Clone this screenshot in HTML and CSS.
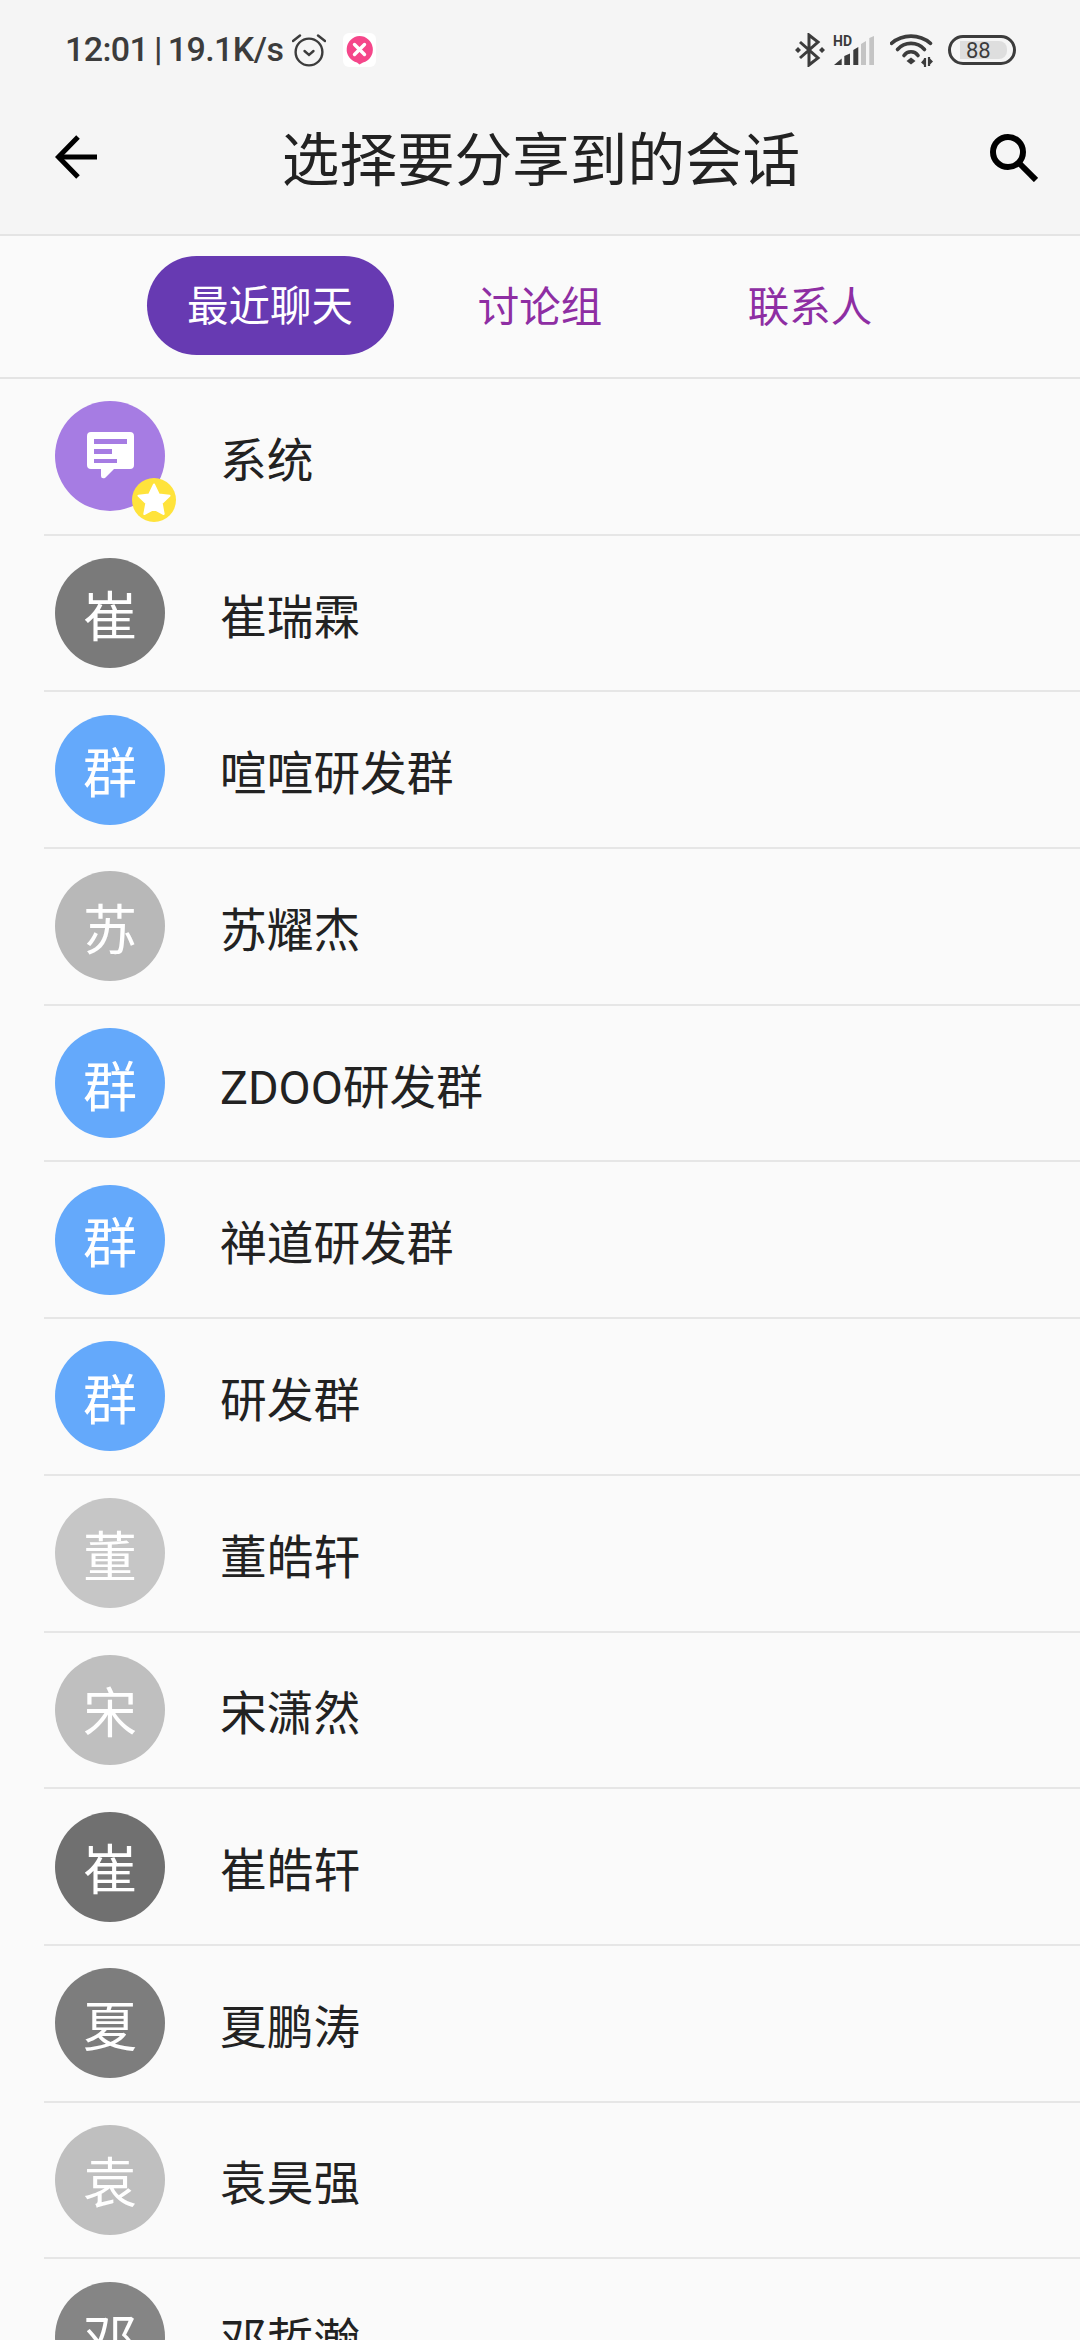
FILE: index.html
```html
<!DOCTYPE html>
<html lang="zh-CN">
<head>
  <meta charset="UTF-8">
  <meta name="viewport" content="width=device-width, initial-scale=1.0">
  <link rel="stylesheet" href="styles.css">
  <title>选择要分享到的会话</title>
</head>
<body>
  <header class="top">
    <!-- status bar -->
    <div class="status">
      <div class="status-left">
        <span class="status-text">12:01 | 19.1K/s</span>
        <svg class="alarm" viewBox="0 0 34 34" fill="none" stroke="#3c3c3c" stroke-width="2.4">
          <circle cx="17" cy="19" r="13.4"/>
          <path d="M1 8 L8 2.5 M33 8 L26 2.5" stroke-linecap="round"/>
          <path d="M12.5 18 L17 22 L21.5 18" stroke-linecap="round"/>
        </svg>
        <svg class="notif" viewBox="0 0 33 34">
          <rect width="33" height="34" rx="6" fill="#fff"/>
          <path d="M16.5 3 A13.5 13.5 0 0 1 20 29.5 L16.5 31.5 L14 29.6 A13.5 13.5 0 0 1 16.5 3 Z" fill="#f5468a"/>
          <path d="M11.5 11.5 L21.5 21.5 M21.5 11.5 L11.5 21.5" stroke="#fff" stroke-width="3.4" stroke-linecap="round"/>
        </svg>
      </div>
      <div class="status-right">
        <svg class="bt" viewBox="0 0 30 34" fill="none" stroke="#3c3c3c" stroke-width="3">
          <path d="M5 9 L23 25 L14 32 L14 2 L23 9 L5 25"/>
          <path d="M0 17 L3 14 L6 17 L3 20 Z M24 17 L27 14 L30 17 L27 20 Z" fill="#3c3c3c" stroke="none"/>
        </svg>
        <svg class="signal" viewBox="0 0 42 31">
          <text x="0" y="11" class="hd">HD</text>
          <path d="M1 30 L8.7 23.5 L8.7 30 Z M11.3 21 L17 18.5 L17 30 L11.3 30 Z M20.3 15 L25.3 12 L25.3 30 L20.3 30 Z" fill="#3c3c3c"/>
          <path d="M28 9 L33 6 L33 30 L28 30 Z M36.3 3 L41 1 L41 30 L36.3 30 Z" fill="#c4c4c4"/>
        </svg>
        <svg class="wifi" viewBox="0 0 43 33" fill="none" stroke="#3c3c3c" stroke-width="3.6" stroke-linecap="round">
          <path d="M1.5 9.3 A30 30 0 0 1 40.5 9.3"/>
          <path d="M7.5 15.5 A18 18 0 0 1 34.5 15.5"/>
          <path d="M14 21.5 A8.5 8.5 0 0 1 28 21.5"/>
          <path d="M21 23.5 L25.5 27 L21 30.5 L16.5 27 Z" fill="#3c3c3c" stroke="none"/>
          <path d="M35 24 L35 33 M39 23 L39 32" stroke-width="2.2" stroke-linecap="butt"/>
          <path d="M31 28.5 L34 25 L34 31 Z M43 27.5 L40 24.5 L40 30.5 Z" fill="#3c3c3c" stroke="none"/>
        </svg>
        <div class="battery">
          <div class="battery-fill">88</div>
        </div>
      </div>
    </div>
    <!-- title bar -->
    <div class="toolbar">
      <svg class="back" viewBox="0 0 42 44" fill="none" stroke="#000" stroke-width="5">
        <path d="M42 22 L4 22"/>
        <path d="M23 2 L3.5 22 L23 42"/>
      </svg>
      <h1 class="title">选择要分享到的会话</h1>
      <svg class="search" viewBox="0 0 48 48" fill="none" stroke="#000" stroke-width="6">
        <circle cx="18" cy="18" r="15"/>
        <path d="M29 29 L46 46"/>
      </svg>
    </div>
  </header>

  <nav class="tabs">
    <div class="tab tab-active"><span class="pill">最近聊天</span></div>
    <div class="tab">讨论组</div>
    <div class="tab">联系人</div>
  </nav>

  <ul class="list">
    <li class="row">
      <div class="avatar purple">
        <svg class="msg" viewBox="0 0 47 47">
          <path d="M4 0 H43 Q47 0 47 4 V33 Q47 37 43 37 H27 L18 46 Q14 47 14 44 V37 H4 Q0 37 0 33 V4 Q0 0 4 0 Z" fill="#fff"/>
          <path d="M7 7 H40 V12 H7 Z M7 17 H25 V22 H7 Z M7 27 H30 V31 H7 Z" fill="#a67ce3"/>
        </svg>
        <svg class="star" viewBox="0 0 44 44">
          <circle cx="22" cy="22" r="22" fill="#ffe33b"/>
          <path d="M22 6.5 L26.8 16.4 L37.5 17.8 L29.7 25.3 L31.7 36 L22 30.8 L12.3 36 L14.3 25.3 L6.5 17.8 L17.2 16.4 Z" fill="#fff" stroke="#fff" stroke-width="2" stroke-linejoin="round"/>
        </svg>
      </div>
      <span class="name">系统</span>
    </li>
    <li class="row"><div class="avatar c-7a">崔</div><span class="name">崔瑞霖</span></li>
    <li class="row"><div class="avatar blue">群</div><span class="name">喧喧研发群</span></li>
    <li class="row"><div class="avatar c-b8">苏</div><span class="name">苏耀杰</span></li>
    <li class="row"><div class="avatar blue">群</div><span class="name">ZDOO研发群</span></li>
    <li class="row"><div class="avatar blue">群</div><span class="name">禅道研发群</span></li>
    <li class="row"><div class="avatar blue">群</div><span class="name">研发群</span></li>
    <li class="row"><div class="avatar c-c5">董</div><span class="name">董皓轩</span></li>
    <li class="row"><div class="avatar c-bd">宋</div><span class="name">宋潇然</span></li>
    <li class="row"><div class="avatar c-70">崔</div><span class="name">崔皓轩</span></li>
    <li class="row"><div class="avatar c-7d">夏</div><span class="name">夏鹏涛</span></li>
    <li class="row"><div class="avatar c-bd">袁</div><span class="name">袁昊强</span></li>
    <li class="row"><div class="avatar c-85">邓</div><span class="name">邓哲瀚</span></li>
  </ul>
</body>
</html>
```

FILE: styles.css
```css
html, body {
  margin: 0;
  height: 2340px;
  overflow: hidden;
}

body {
  background: #fafafa;
  color: #222;
  font-family: Roboto, "Noto Sans CJK SC", sans-serif;
}

.top {
  background: #f5f5f5;
  border-bottom: 2px solid #e4e4e4;
  height: 234px;
}

.status {
  height: 100px;
  display: flex;
  justify-content: space-between;
  align-items: center;
  padding: 0 64px 0 65px;
}

.status-left, .status-right {
  display: flex;
  align-items: center;
}

.status-text {
  font-family: Roboto, sans-serif;
  font-size: 34px;
  font-weight: 500;
  letter-spacing: -0.6px;
  word-spacing: -2px;
  color: #3c3c3c;
  white-space: nowrap;
  margin-bottom: 2px;
}

.alarm {
  width: 34px;
  height: 34px;
  margin-left: 9px;
}

.notif {
  width: 33px;
  height: 34px;
  margin-left: 17px;
}

.bt {
  width: 30px;
  height: 34px;
}

.signal {
  width: 42px;
  height: 31px;
  margin-left: 8px;
}

.hd {
  font-family: Roboto, sans-serif;
  font-size: 14px;
  font-weight: 700;
  fill: #3c3c3c;
}

.wifi {
  width: 43px;
  height: 33px;
  margin-left: 15px;
}

.battery {
  width: 68px;
  height: 30px;
  box-sizing: border-box;
  margin-left: 15px;
  border: 3px solid #3c3c3c;
  border-radius: 15px;
  padding: 3px 6px 3px 9px;
}

.battery-fill {
  height: 100%;
  background: #dedede;
  border-radius: 0 8px 8px 0;
  font-family: Roboto, sans-serif;
  font-size: 22px;
  line-height: 19px;
  color: #3c3c3c;
  padding-left: 6px;
}

.toolbar {
  height: 134px;
  display: flex;
  align-items: center;
  justify-content: space-between;
  padding: 0 42px 0 55px;
}

.back {
  width: 42px;
  height: 44px;
  margin-bottom: 21px;
}

.title {
  margin: 0 5px 10px 0;
  font-size: 57.6px;
  font-weight: 400;
  line-height: 64px;
  color: #222;
  white-space: nowrap;
}

.search {
  width: 48px;
  height: 48px;
  margin-bottom: 18px;
}

.tabs {
  height: 143px;
  box-sizing: border-box;
  border-bottom: 2px solid #e4e4e4;
  padding: 0 135px;
  display: grid;
  grid-template-columns: repeat(3, 1fr);
  align-items: center;
  text-align: center;
  font-size: 41.5px;
  color: #8e2ea3;
}

.tab {
  padding-bottom: 6px;
}

.tab-active {
  padding-bottom: 2px;
}

.pill {
  display: block;
  width: 247px;
  height: 99px;
  line-height: 102px;
  margin: 0 auto;
  border-radius: 50px;
  background: #673ab2;
  color: #fff;
}

.list {
  list-style: none;
  margin: 0;
  padding: 0;
}

.row {
  height: 156.7px;
  box-sizing: border-box;
  margin-left: 44px;
  padding-left: 11px;
  border-bottom: 2px solid #e6e6e6;
  display: flex;
  align-items: center;
}

.avatar {
  position: relative;
  flex: none;
  width: 110px;
  height: 110px;
  border-radius: 50%;
  display: flex;
  align-items: center;
  justify-content: center;
  color: #fff;
  font-size: 54px;
}

.purple { background: #a67ce3; }
.blue { background: #64a9fb; }
.c-70 { background: #707070; }
.c-7a { background: #7a7a7a; }
.c-7d { background: #7d7d7d; }
.c-85 { background: #858585; }
.c-b8 { background: #b8b8b8; }
.c-bd { background: #bfbfbf; }
.c-c5 { background: #c6c6c6; }

.msg {
  width: 47px;
  height: 47px;
  margin-bottom: 2px;
}

.star {
  position: absolute;
  right: -11px;
  bottom: -11px;
  width: 44px;
  height: 44px;
}

.name {
  margin-left: 55px;
  font-size: 46.7px;
  color: #222;
  white-space: nowrap;
}
```
